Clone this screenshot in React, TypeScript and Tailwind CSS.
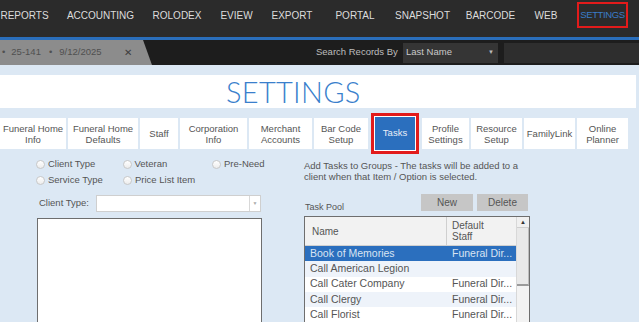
import React from "react";

const navItems: { label: string; w: string }[] = [
  { label: "REPORTS", w: "w-[49px]" },
  { label: "ACCOUNTING", w: "w-[103px]" },
  { label: "ROLODEX", w: "w-[50px]" },
  { label: "EVIEW", w: "w-[69px]" },
  { label: "EXPORT", w: "w-[42px]" },
  { label: "PORTAL", w: "w-[84px]" },
  { label: "SNAPSHOT", w: "w-[51px]" },
  { label: "BARCODE", w: "w-[85px]" },
  { label: "WEB", w: "w-[26px]" },
];

const tabs: { label: string[]; w: string; active?: boolean }[] = [
  { label: ["Funeral Home", "Info"], w: "w-[66px]" },
  { label: ["Funeral Home", "Defaults"], w: "w-[70px]" },
  { label: ["Staff"], w: "w-[38px]" },
  { label: ["Corporation", "Info"], w: "w-[67px]" },
  { label: ["Merchant", "Accounts"], w: "w-[63px]" },
  { label: ["Bar Code", "Setup"], w: "w-[54px]" },
  { label: ["Tasks"], w: "w-[42px]", active: true },
  { label: ["Profile", "Settings"], w: "w-[47px]" },
  { label: ["Resource", "Setup"], w: "w-[51px]" },
  { label: ["FamilyLink"], w: "w-[51px]" },
  { label: ["Online", "Planner"], w: "w-[51px]" },
];

const rows = [
  { name: "Book of Memories", staff: "Funeral Dir...", sel: true },
  { name: "Call American Legion", staff: "" },
  { name: "Call Cater Company", staff: "Funeral Dir..." },
  { name: "Call Clergy", staff: "Funeral Dir..." },
  { name: "Call Florist", staff: "Funeral Dir..." },
];

function Radio({ label, w }: { label: string; w: string }) {
  return (
    <div className={`flex items-center ${w}`}>
      <span className="w-[9px] h-[9px] shrink-0 rounded-full border border-[#c8c8c8] bg-[linear-gradient(#ffffff,#ececec)] mr-[3px]" />
      <span className="text-[9.5px] text-[#555] whitespace-nowrap">{label}</span>
    </div>
  );
}

export default function App() {
  return (
    <div className="w-[639px] h-[322px] overflow-hidden bg-[#dce8f4] font-['Liberation_Sans',Arial,sans-serif]">
      {/* top nav */}
      <div className="h-[37px] bg-[#2b2b2b] flex items-start pt-[2px]">
        {navItems.map((n) => (
          <div key={n.label} className={`${n.w} h-[26px] flex items-center justify-center text-[10px] text-[#dcdcdc] whitespace-nowrap`}>
            {n.label}
          </div>
        ))}
        <div className="ml-[18px] w-[51px] h-[26px] border-2 border-[#e21b1b] flex items-center justify-center text-[9.5px] text-[#3a7cc8] tracking-[-0.4px]">
          SETTINGS
        </div>
      </div>
      <div className="h-[3px] bg-[#2a6ebb]" />
      {/* second bar */}
      <div className="h-[25px] bg-[#1d1d1d] flex items-center">
        <div className="h-full w-[152px] bg-[#8c8c8c] [clip-path:polygon(0_0,143px_0,152px_100%,0_100%)] flex items-center text-[9.5px] text-[#505050]">
          <span className="ml-[2px]">•</span>
          <span className="ml-[6px]">25-141</span>
          <span className="ml-[8px]">•</span>
          <span className="ml-[7px]">9/12/2025</span>
          <span className="ml-[22px] text-[10px] text-[#3e3e3e]">✕</span>
        </div>
        <div className="ml-[164px] text-[9.5px] text-[#bdbdbd] w-[87px] whitespace-nowrap">Search Records By</div>
        <div className="w-[95px] h-[20px] bg-[#353535] flex items-center justify-between px-[3px] text-[9.5px] text-[#c9c9c9]">
          <span>Last Name</span>
          <span className="text-[6px] text-[#bbb] mr-[1px]">▼</span>
        </div>
        <div className="ml-[6px] flex-1 h-[20px] bg-[#2e2e2e]" />
      </div>
      {/* banner */}
      <div className="mt-[10px] mr-[3px] h-[33px] bg-white flex items-center">
        <span className="ml-[226px] text-[29px] leading-none text-[#3a7fcc] tracking-[0.3px] font-['Lato',sans-serif] font-light">
          SETTINGS
        </span>
      </div>
      {/* tabs */}
      <div className="mt-[5px] h-[41px] flex items-center gap-[2px]">
        {tabs.map((t) =>
          t.active ? (
            <div key="tasks" className="h-[41px] w-[48px] border-[3px] border-[#e21b1b] p-[1px] bg-white mx-[1px]">
              <div className="w-full h-full bg-[#2b6fbe] flex items-center justify-center text-[9.5px] text-[#e8eef7]">
                Tasks
              </div>
            </div>
          ) : (
            <div
              key={t.label.join()}
              className={`${t.w} h-[31px] bg-white flex flex-col items-center justify-center text-[9.5px] leading-[11px] text-[#555] text-center`}
            >
              {t.label.map((l) => (
                <span key={l} className="whitespace-nowrap">{l}</span>
              ))}
            </div>
          )
        )}
      </div>
      {/* content */}
      <div className="flex">
        {/* left */}
        <div className="ml-[36px] w-[226px] pt-[3px]">
          <div className="flex h-[15px]">
            <Radio label="Client Type" w="w-[87px]" />
            <Radio label="Veteran" w="w-[90px]" />
            <Radio label="Pre-Need" w="w-[50px]" />
          </div>
          <div className="flex h-[15px] mt-[1px]">
            <Radio label="Service Type" w="w-[87px]" />
            <Radio label="Price List Item" w="w-[90px]" />
          </div>
          <div className="mt-[7px] flex items-center h-[17px]">
            <span className="ml-[3px] w-[57px] text-[9.5px] text-[#555]">Client Type:</span>
            <div className="w-[165px] h-[17px] bg-white border border-[#cfcfcf] flex justify-end">
              <div className="w-[11px] h-full border-l border-[#d8d8d8] flex items-center justify-center text-[5px] text-[#aaa]">▼</div>
            </div>
          </div>
          <div className="mt-[6px] ml-[1px] w-[225px] h-[120px] bg-white border border-[#6e6e6e]" />
        </div>
        {/* right */}
        <div className="ml-[42px] w-[225px] pt-[7px]">
          <div className="text-[9.5px] leading-[10.5px] text-[#555] whitespace-nowrap">
            <div>Add Tasks to Groups - The tasks will be added to a</div>
            <div>client when that Item / Option is selected.</div>
          </div>
          <div className="mt-[12px] flex items-end h-[17px]">
            <span className="ml-[1px] w-[116px] text-[9px] text-[#555] mb-[-3px]">Task Pool</span>
            <div className="w-[52px] h-[17px] bg-[#c6c6c6] flex items-center justify-center text-[10px] text-[#555]">New</div>
            <div className="ml-[4px] w-[51px] h-[17px] bg-[#c6c6c6] flex items-center justify-center text-[10px] text-[#555]">Delete</div>
          </div>
          <div className="mt-[5px] w-[226px] h-[120px] border border-[#6e6e6e] bg-white flex">
            <div className="w-[211px]">
              <div className="h-[29px] flex bg-[#f2f2f2] border-b border-[#d0d0d0]">
                <div className="w-[142px] border-r border-[#cfcfcf] flex items-center pl-[7px] text-[10px] text-[#555]">Name</div>
                <div className="flex-1 flex flex-col justify-center pl-[5px] text-[10px] leading-[11px] text-[#555]">
                  <span>Default</span>
                  <span>Staff</span>
                </div>
              </div>
              {rows.map((r, i) => (
                <div
                  key={r.name}
                  className={`h-[15.3px] flex items-center text-[10.5px] ${
                    r.sel ? "bg-[#2b6fbe] text-[#d9e4f2]" : i % 2 === 1 ? "bg-[#eef3fa] text-[#555]" : "bg-white text-[#555]"
                  }`}
                >
                  <span className="w-[142px] pl-[5px] whitespace-nowrap">{r.name}</span>
                  <span className="pl-[5px] whitespace-nowrap">{r.staff}</span>
                </div>
              ))}
            </div>
            <div className="w-[13px] bg-[#f3f3f3] border-l border-[#d8d8d8] flex flex-col">
              <div className="h-[11px] flex items-center justify-center text-[6px] text-[#333] bg-[#f0f0f0] border-b border-[#cfcfcf]">▲</div>
              <div className="h-[58px] bg-[#e9e9e9] border-b-2 border-[#9a9a9a] border-r border-r-[#bdbdbd]" />
            </div>
          </div>
        </div>
      </div>
    </div>
  );
}
